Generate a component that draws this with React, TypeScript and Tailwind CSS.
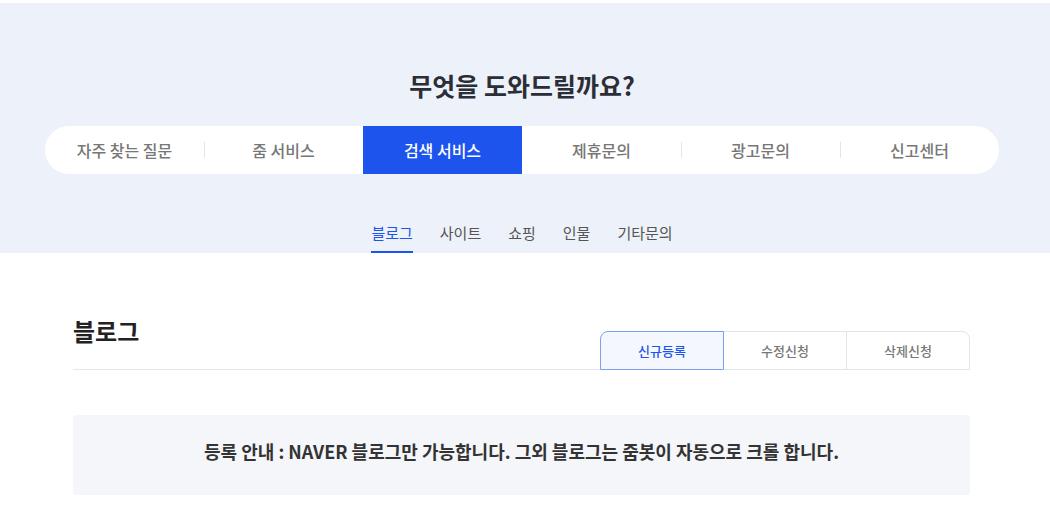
import { useState } from 'react';

const MAIN_TABS = ['자주 찾는 질문', '줌 서비스', '검색 서비스', '제휴문의', '광고문의', '신고센터'];
const SUB_TABS = ['블로그', '사이트', '쇼핑', '인물', '기타문의'];
const REQ_TABS = ['신규등록', '수정신청', '삭제신청'];

export default function App() {
  const [mainTab, setMainTab] = useState(2);
  const [subTab, setSubTab] = useState(0);
  const [reqTab, setReqTab] = useState(0);

  return (
    <div
      className="min-h-screen bg-white pt-[3px] text-[#222]"
      style={{ fontFamily: '"Noto Sans CJK KR", "Noto Sans", sans-serif' }}
    >
      {/* Hero band */}
      <div className="w-full bg-[#edf1f9]">
        <div className="w-[1044px] flex flex-col items-center pt-[66px]">
          <h1 className="text-[25px] leading-[32px] font-bold text-[#2b2e36]">
            무엇을 도와드릴까요?
          </h1>

          <div className="mt-[25px] w-[954px] h-[48px] bg-white rounded-full overflow-hidden flex">
            {MAIN_TABS.map((t, i) => {
              const active = i === mainTab;
              const showDivider = i > 0 && i !== mainTab && i - 1 !== mainTab;
              return (
                <button
                  key={t}
                  onClick={() => setMainTab(i)}
                  className={
                    'relative flex-1 flex items-center justify-center text-[16px] font-medium ' +
                    (active ? 'bg-[#1d54ed] text-white' : 'text-[#777]')
                  }
                >
                  {showDivider && (
                    <span className="absolute left-0 top-1/2 -translate-y-1/2 w-px h-[16px] bg-[#e1e5ee]" />
                  )}
                  {t}
                </button>
              );
            })}
          </div>

          <div className="mt-[49px] flex gap-[27px]">
            {SUB_TABS.map((t, i) => (
              <button
                key={t}
                onClick={() => setSubTab(i)}
                className={
                  'pb-[8px] border-b-2 text-[15px] leading-[20px] ' +
                  (i === subTab ? 'border-[#1d54ed] text-[#1d54ed]' : 'border-transparent text-[#555]')
                }
              >
                {t}
              </button>
            ))}
          </div>
        </div>
      </div>

      {/* Content */}
      <div className="w-[1044px] pl-[73px] pr-[74px] pt-[63px]">
        <div className="flex justify-between items-end h-[54px] border-b border-[#e4e7ef]">
          <h2 className="self-start text-[24px] leading-[30px] font-bold text-[#222]">블로그</h2>
          <div className="flex -mb-px">
            {REQ_TABS.map((t, i) => {
              const active = i === reqTab;
              return (
                <button
                  key={t}
                  onClick={() => setReqTab(i)}
                  className={
                    'relative w-[124px] h-[39px] border text-[13px] font-medium ' +
                    (i > 0 ? '-ml-px ' : '') +
                    (i === 0 ? 'rounded-tl-[8px] ' : '') +
                    (i === REQ_TABS.length - 1 ? 'rounded-tr-[8px] ' : '') +
                    (active
                      ? 'z-10 border-[#7f9ff5] bg-[#f5f7fe] text-[#1d54ed]'
                      : 'border-[#e0e4ec] bg-white text-[#777]')
                  }
                >
                  {t}
                </button>
              );
            })}
          </div>
        </div>

        <div className="mt-[45px] h-[80px] pb-[7px] rounded-[4px] bg-[#f5f6fa] flex items-center justify-center">
          <p className="text-[18px] font-bold text-[#333]">
            등록 안내 : NAVER 블로그만 가능합니다. 그외 블로그는 줌봇이 자동으로 크롤 합니다.
          </p>
        </div>
      </div>
    </div>
  );
}
